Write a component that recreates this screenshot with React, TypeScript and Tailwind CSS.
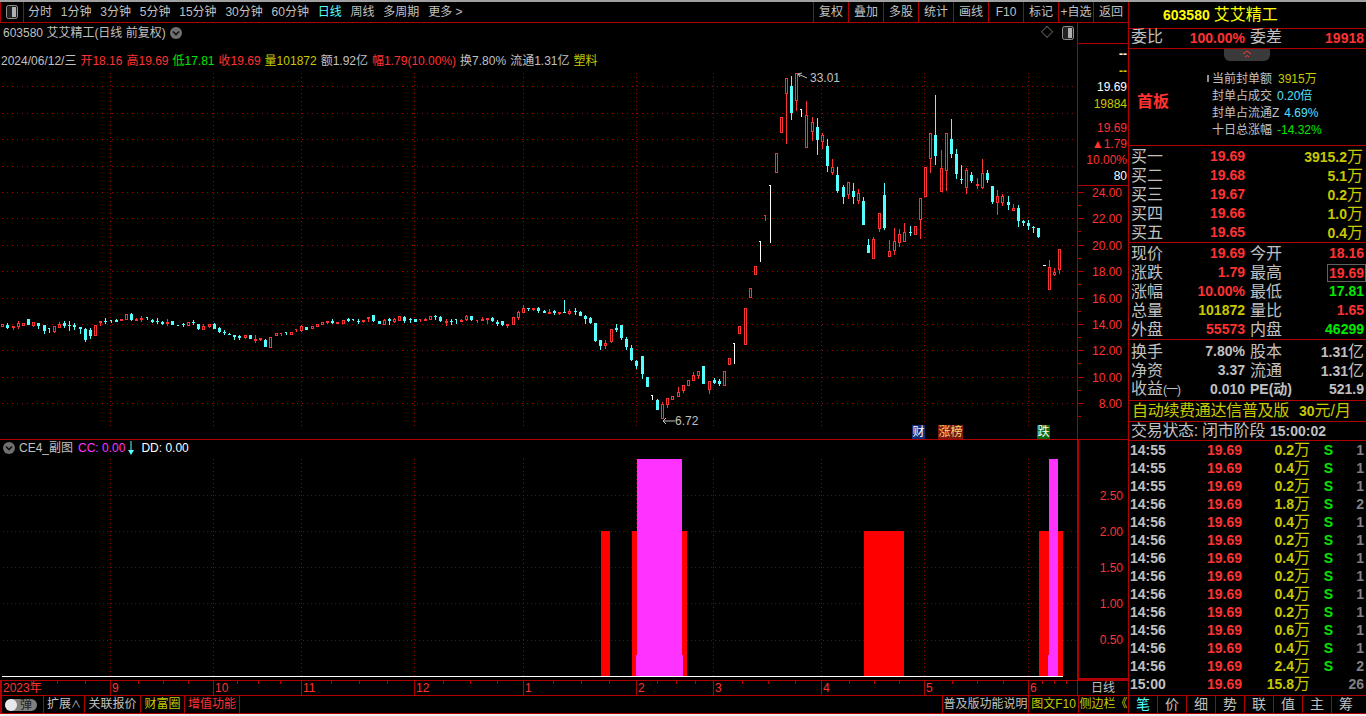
import { ReactNode } from "react";

const RED = "#ff3232";
const CYAN = "#54ffff";
const GRID = "#a00000";

// kind, body top, body bottom, wick high, wick low (pixels on the page)
type Candle = [string, number, number, number?, number?];

const candles: Candle[] = [
  ["r",324,327],["c",325,328,323,329],["r",326,328,326,330],["r",323,327,321,329],["r",323,326],
  ["c",319,325],["r",322,326,322,327],["c",323,326,323,329],["c",325,331,325,334],["q",328,333],
  ["r",326,332,326,333],["r",324,328,322,328],["c",323,326,321,328],["c",325,326,321,331],["c",325,327,323,330],
  ["c",327,329,327,334],["c",329,340,328,342],["c",330,336,328,339],["r",325,336],["r",321,323,321,326],
  ["c",321,322,318,324],["q",320,323],["c",320,322,319,322],["r",319,321],["r",314,320],
  ["c",314,320,313,321],["r",319,321,318,321],["r",318,320,316,322],["q",317,320],["c",320,322,319,323],
  ["c",321,322,318,324],["c",322,324,321,325],["r",322,324,319,326],["c",321,325],["q",325,326],
  ["c",324,325,323,327],["r",322,326],["c",322,323,320,325],["c",324,329,324,330],["r",326,330,324,330],
  ["r",324,327,324,328],["c",324,329,323,329],["c",328,332,327,333],["c",332,333,330,335],["c",334,335,333,335],
  ["c",335,337,335,340],["c",336,338,335,340],["r",335,338,335,339],["c",335,339],["r",339,341,335,343],
  ["r",338,340,338,341],["c",340,347,339,347],["r",337,348],["r",333,336],["h",333,336],
  ["q",332,335],["r",332,335],["h",329,332],["r",326,331,325,332],["c",327,330],
  ["r",326,329],["r",324,327],["r",322,325],["r",321,323,321,324],["c",321,323,319,324],
  ["r",322,324],["r",320,324],["c",319,321,318,322],["q",319,321],["c",321,322,319,324],
  ["r",320,322,320,323],["r",317,319,317,322],["c",315,321,315,322],["c",321,324],["r",320,325,319,325],
  ["c",319,321,318,325],["r",319,322,318,323],["r",316,321],["c",317,321,316,323],["c",319,320,318,323],
  ["c",319,322],["h",319,322],["r",319,321,318,321],["r",316,320],["c",316,317,315,320],
  ["c",317,321,316,322],["r",321,323,319,326],["c",321,322,319,325],["q",319,324],["r",320,322,319,322],
  ["r",316,320,315,321],["c",316,320,316,321],["h",320,323],["r",319,321,317,321],["r",318,320,318,324],
  ["c",318,321,317,322],["c",322,324,320,326],["c",321,325,321,326],["r",324,326,324,328],["r",317,325],
  ["r",312,318,311,320],["r",308,313,305,313],["c",308,309,308,311],["r",308,310,308,311],["c",308,311,307,313],
  ["c",311,313,310,313],["r",312,314,309,314],["c",311,313,310,315],["r",312,314,312,315],["c",312,313,300,313],
  ["r",311,314,309,315],["c",311,312,308,315],["c",312,316,311,316],["c",316,319,315,324],["c",318,323,317,324],
  ["c",323,341,323,342],["c",340,346,340,350],["r",343,346,340,349],["r",329,342,329,343],["c",328,330,324,332],
  ["c",325,338,325,340],["c",339,347,337,350],["c",348,360,345,361],["c",361,366,360,369],["c",356,374,356,379],
  ["c",377,387],["w",395,400],["c",400,410,399,410],["r",404,419,402,419],["r",398,405,398,408],
  ["r",396,400],["r",392,397,387,397],["r",385,391,385,393],["r",380,386],["r",375,381,372,381],
  ["r",371,376,371,379],["c",366,384],["r",381,390,381,394],["c",380,383,378,384],["c",381,384,379,386],
  ["r",371,386],["r",358,365],["w",343,364],["r",326,334],["r",308,345],
  ["r",288,298],["r",266,275],["w",241,262],["h",215,221],["w",185,243],
  ["r",153,173],["r",117,133],["r",78,94,78,144],["c",86,113,76,120],["r",73,101,73,111],
  ["w",109,117],["r",115,148,101,148],["r",122,132,117,141],["c",127,140,118,155],["r",135,142,133,149],
  ["c",146,166,139,172],["r",167,173,159,175],["c",175,191,167,193],["c",187,197,185,204],["r",182,195,182,199],
  ["c",191,197,183,204],["r",193,201,189,204],["c",201,225,197,225],["c",245,253,239,253],["r",239,259,237,259],
  ["r",213,229,213,232],["c",195,228,183,230],["r",251,257,240,257],["r",241,251,228,255],["r",234,243,229,247],
  ["r",232,242,223,242],["c",232,233,226,236],["r",226,235],["r",198,220,198,239],["r",167,197],
  ["r",133,159,133,173],["c",135,156,95,165],["r",168,192,150,192],["r",133,171,133,191],["c",139,154,119,158],
  ["c",154,174,149,179],["c",179,180,165,184],["r",170,188,168,194],["c",175,181,172,183],["r",184,186,178,189],
  ["r",173,188,159,189],["c",173,180,170,183],["c",186,202,186,204],["r",196,203,190,215],["r",196,203,194,206],
  ["c",202,205,196,210],["r",208,211,204,211],["c",208,221,205,227],["c",221,223,220,226],["c",223,226,220,230],
  ["c",227,228,226,233],["c",228,237,228,238],["d",265,266],["r",267,290,260,290],["r",272,275,268,276],
  ["r",249,270,249,274],
];

const monthLines = [110, 213, 301, 414, 523, 636, 713, 821, 924, 1028];

const candleX = (i: number) => Math.round(2.3 + 5.155 * i);

const CircleChevron = () => (
  <svg width="12" height="12" viewBox="0 0 12 12" className="shrink-0">
    <circle cx="6" cy="6" r="6" fill="#707070" />
    <path d="M3 4.5 L6 7.5 L9 4.5" fill="none" stroke="#111" strokeWidth="1.6" />
  </svg>
);

const PanelIcon = () => (
  <svg width="12" height="14" viewBox="0 0 12 14" className="shrink-0">
    <rect x="0.5" y="0.5" width="11" height="13" rx="2" fill="#222" stroke="#909090" />
    <rect x="6" y="2" width="4" height="10" fill="#b0b0b0" />
  </svg>
);

const MainChart = () => (
  <svg width="1077" height="416" viewBox="0 23 1077 416" shapeRendering="crispEdges" className="block">
    {[86, 113, 139, 166, 192, 218, 245, 271, 298, 324, 350, 377, 403].map((y) => (
      <line key={y} x1="2" x2="1076" y1={y + 0.5} y2={y + 0.5} stroke={GRID} strokeDasharray="1 4" />
    ))}
    {monthLines.map((x) => (
      <line key={x} x1={x + 0.5} x2={x + 0.5} y1="73" y2="426" stroke={GRID} strokeDasharray="1 3" />
    ))}
    {candles.map(([kind, top, bottom, high, low], i) => {
      const x = candleX(i);
      if (kind === "d") return <rect key={i} x={x - 1} y={top} width="3" height="1" fill="#fff" />;
      if (kind === "w" || kind === "h" || kind === "q") {
        const color = kind === "w" ? "#fff" : kind === "h" ? RED : CYAN;
        return (
          <g key={i} fill={color}>
            <rect x={x} y={top} width="1" height={bottom - top} />
            <rect x={x - 1} y={top} width="1" height="1" />
          </g>
        );
      }
      const color = kind === "c" ? CYAN : RED;
      return (
        <g key={i}>
          <rect x={x} y={high ?? top} width="1" height={(low ?? bottom) - (high ?? top)} fill={color} />
          {kind === "c" ? (
            <rect x={x - 1} y={top} width="3" height={Math.max(bottom - top, 1)} fill={color} />
          ) : (
            <rect x={x - 0.5} y={top + 0.5} width="2" height={Math.max(bottom - top - 1, 1)} fill="#000" stroke={color} />
          )}
        </g>
      );
    })}
    <g stroke="#c0c0c0" fill="none" shapeRendering="auto">
      <path d="M807 78 L798 74 M798 74 L802 73 M798 74 L800 77" />
      <path d="M675 421 L663 421 M663 421 L666 418 M663 421 L666 424" />
    </g>
  </svg>
);

const SubChart = () => (
  <svg width="1077" height="239" viewBox="0 440 1077 239" shapeRendering="crispEdges" className="block">
    {[495, 531, 567, 603, 640].map((y) => (
      <line key={y} x1="3" x2="1076" y1={y + 0.5} y2={y + 0.5} stroke="#800000" strokeDasharray="1 3" />
    ))}
    {monthLines.map((x) => (
      <line key={x} x1={x + 0.5} x2={x + 0.5} y1="459" y2="676" stroke={GRID} strokeDasharray="1 3" />
    ))}
    <g fill="#ff0000">
      <rect x="601" y="531" width="9" height="145" />
      <rect x="632" y="531" width="55" height="145" />
      <rect x="864" y="531" width="40" height="145" />
      <rect x="1039" y="531" width="24" height="145" />
    </g>
    <g fill="#ff33ff">
      <rect x="637" y="459" width="45" height="217" />
      <rect x="636" y="655" width="47" height="21" />
      <rect x="1049" y="459" width="9" height="217" />
      <rect x="1048" y="655" width="10" height="21" />
    </g>
    <rect x="2" y="676" width="1061" height="1" fill="#fff" />
  </svg>
);

const ToolTab = ({ children }: { children: ReactNode }) => (
  <div className="w-[35px] h-full border-l border-[#b00000] flex items-center justify-center">{children}</div>
);

const Toolbar = () => (
  <div className="h-[21px] border-b border-[#b00000] flex items-stretch text-[12px] leading-[20px] text-[#c0c0c0]">
    <div className="w-[24px] border-x border-[#b00000] flex items-center justify-center">
      <PanelIcon />
    </div>
    <div className="flex gap-[8.8px] pl-[4px]">
      <span>分时</span>
      <span>1分钟</span>
      <span>3分钟</span>
      <span>5分钟</span>
      <span>15分钟</span>
      <span>30分钟</span>
      <span>60分钟</span>
      <span className="text-[#54ffff]">日线</span>
      <span>周线</span>
      <span>多周期</span>
      <span>更多 &gt;</span>
    </div>
    <div className="ml-auto flex items-center">
      {["复权", "叠加", "多股", "统计", "画线", "F10", "标记", "+自选", "返回"].map((t) => (
        <ToolTab key={t}>{t}</ToolTab>
      ))}
    </div>
  </div>
);

const InfoItem = ({ label, value, labelColor, valueColor }: { label: string; value: string; labelColor: string; valueColor: string }) => (
  <span>
    <span style={{ color: labelColor }}>{label}</span>
    <span style={{ color: valueColor }}>{value}</span>
  </span>
);

const MainPanel = () => (
  <div className="h-[417px] border-b border-[#b00000] flex">
    <div className="relative w-[1077px]">
      <MainChart />
      <div className="absolute left-[3px] top-[1px] h-[18px] flex items-center gap-[4px] text-[12px] text-[#c0c0c0]">
        <span>603580 艾艾精工(日线 前复权)</span>
        <CircleChevron />
      </div>
      <div className="absolute right-[3px] top-[2px] flex items-center gap-[9px]">
        <span className="text-[12px] leading-[16px] text-[#a0a0a0]">◇</span>
        <PanelIcon />
      </div>
      <div className="absolute left-[1px] top-[30px] h-[16px] flex items-center gap-[4px] text-[12px] whitespace-nowrap text-[#c0c0c0]">
        <span>2024/06/12/三</span>
        <InfoItem label="开" value="18.16" labelColor={RED} valueColor={RED} />
        <InfoItem label="高" value="19.69" labelColor={RED} valueColor={RED} />
        <InfoItem label="低" value="17.81" labelColor="#00e800" valueColor="#00e800" />
        <InfoItem label="收" value="19.69" labelColor={RED} valueColor={RED} />
        <InfoItem label="量" value="101872" labelColor="#c8c800" valueColor="#c8c800" />
        <InfoItem label="额" value="1.92亿" labelColor="#c0c0c0" valueColor="#c0c0c0" />
        <InfoItem label="幅" value="1.79(10.00%)" labelColor={RED} valueColor={RED} />
        <InfoItem label="换" value="7.80%" labelColor="#c0c0c0" valueColor="#c0c0c0" />
        <InfoItem label="流通" value="1.31亿" labelColor="#c0c0c0" valueColor="#c0c0c0" />
        <span className="text-[#c8c800]">塑料</span>
      </div>
      <span className="absolute left-[810px] top-[48px] text-[12px] leading-[14px] text-[#c0c0c0]">33.01</span>
      <span className="absolute left-[675px] top-[391px] text-[12px] leading-[14px] text-[#c0c0c0]">6.72</span>
      <span className="absolute left-[912px] top-[402px] w-[13px] h-[14px] bg-[#12307a] text-white text-[12px] leading-[14px] text-center">财</span>
      <span className="absolute left-[938px] top-[402px] w-[25px] h-[14px] bg-[#7a1a10] text-[#ffd070] text-[12px] leading-[14px] text-center">涨榜</span>
      <span className="absolute left-[1037px] top-[402px] w-[13px] h-[14px] bg-[#0a6a10] text-white text-[12px] leading-[14px] text-center">跌</span>
    </div>
    <MainAxis />
  </div>
);

const AXIS_VALUES = ["24.00", "22.00", "20.00", "18.00", "16.00", "14.00", "12.00", "10.00", "8.00"];

const MainAxis = () => (
  <div className="w-[51px] border-l border-[#b00000] flex flex-col text-[12px] text-right">
    <div className="h-[21px] border-b border-[#b00000]" />
    <div className="h-[142px] border-b border-[#b00000] pt-[2px] pr-[1px] whitespace-nowrap">
      <div className="h-[16.5px] leading-[16.5px] font-bold text-white">--</div>
      <div className="h-[16.5px] leading-[16.5px] font-bold text-[#c8c800]">--</div>
      <div className="h-[16.5px] leading-[16.5px] text-white">19.69</div>
      <div className="h-[16.5px] leading-[16.5px] text-[#c8c800]">19884</div>
      <div className="h-[16px] leading-[16px] mt-[8px] text-[#ff3232]">19.69</div>
      <div className="h-[16px] leading-[16px] text-[#ff3232]">▲1.79</div>
      <div className="h-[16px] leading-[16px] text-[#ff3232]">10.00%</div>
      <div className="h-[16px] leading-[16px] text-white">80</div>
    </div>
    <div className="relative flex-1 pr-[6px] text-[#ff3232]">
      {AXIS_VALUES.map((v) => (
        <div key={v} className="h-[26.4px] leading-[14px]">{v}</div>
      ))}
      <svg width="10" height="253" className="absolute left-0 top-0" shapeRendering="crispEdges">
        {AXIS_VALUES.map((v, i) => (
          <g key={v} fill="#b00000">
            <rect x="0" y={Math.round(6 + 26.4 * i)} width="6" height="1" />
            <rect x="0" y={Math.round(19 + 26.4 * i)} width="3" height="1" />
          </g>
        ))}
      </svg>
    </div>
  </div>
);

const SUB_VALUES = ["2.50", "2.00", "1.50", "1.00", "0.50"];

const SubPanel = () => (
  <div className="h-[240px] flex">
    <div className="relative w-[1077px] h-[240px]">
      <SubChart />
      <div className="absolute left-[3px] top-0 h-[16px] flex items-center text-[12px] whitespace-nowrap">
        <CircleChevron />
        <span className="ml-[4px] text-[#c0c0c0]">CE4_副图</span>
        <span className="ml-[5px] text-[#ff33ff]">CC: 0.00</span>
        <svg width="8" height="14" viewBox="0 0 8 14" className="ml-[2px]">
          <path d="M4 0 V12" stroke={CYAN} strokeWidth="1" />
          <path d="M1 9 L4 14 L7 9 Z" fill={CYAN} />
        </svg>
        <span className="ml-[6px] text-white">DD: 0.00</span>
      </div>
    </div>
    <div className="w-[51px] h-[240px] border-l-2 border-b-2 border-[#b00000] flex flex-col items-end pr-[5px] pt-[49px] text-[12px] text-[#ff3232]">
      {SUB_VALUES.map((v) => (
        <div key={v} className="h-[36px] leading-[14px]">{v}</div>
      ))}
    </div>
  </div>
);

const MONTHS: [string, number][] = [
  ["2023年", 110], ["9", 103], ["10", 88], ["11", 113], ["12", 109], ["1", 113], ["2", 77], ["3", 108], ["4", 103], ["5", 104], ["6", 49],
];

const TimeAxis = () => (
  <div className="h-[16px] border-t border-b border-[#b00000] flex text-[12px] leading-[14px] text-[#ff3232]">
    <div className="w-[1077px] flex border-l-2 border-[#b00000]">
      {MONTHS.map(([label, width], i) => (
        <div key={label} style={{ width: i === 0 ? width - 2 : width }} className={i === 0 ? "relative pl-[1px]" : "relative pl-[1px] border-l border-[#b00000]"}>
          {label}
          <svg width={width} height="4" className="absolute left-0 top-0" shapeRendering="crispEdges">
            {[0.26, 0.5, 0.75].map((f) => (
              <rect key={f} x={Math.round(width * f)} y="0" width="1" height="3" fill="#b00000" />
            ))}
          </svg>
        </div>
      ))}
    </div>
    <div className="flex-1 border-l border-[#b00000] text-center text-[#c0c0c0]">日线</div>
  </div>
);

const BottomBar = () => (
  <div className="h-[18px] border-b border-[#b00000] flex text-[12px] leading-[17px] text-[#c0c0c0] whitespace-nowrap">
    <div className="w-[43px] border-l-2 border-[#b00000] flex items-center pl-[3px]">
      <div className="w-[32px] h-[12px] rounded-full bg-[#808080] flex items-center">
        <div className="w-[12px] h-[12px] rounded-full bg-[#e8e8e8]" />
        <span className="ml-[3px] text-[12px] leading-[12px] text-[#222]">弹</span>
      </div>
    </div>
    <div className="w-[41px] border-l border-[#b00000] text-center">
      扩展<span className="text-[10px]">∧</span>
    </div>
    <div className="w-[56px] border-l border-[#b00000] text-center">关联报价</div>
    <div className="w-[44px] border-l border-[#b00000] text-center text-[#c8c800]">财富圈</div>
    <div className="w-[56px] border-l border-[#b00000] border-r text-center text-[#ff3232]">增值功能</div>
    <div className="ml-auto w-[86px] border-l border-[#b00000] text-center">普及版功能说明</div>
    <div className="w-[50px] border-l border-[#b00000] text-center text-[#c8c800]">图文F10</div>
    <div className="w-[50px] border-l border-[#b00000] text-center text-[#c8c800]">侧边栏《</div>
  </div>
);

const QuoteRow = ({ h, a, av, ac, b, bv, bc, boxed }: { h: string; a: string; av: string; ac: string; b: string; bv: string; bc: string; boxed?: boolean }) => (
  <div className={`${h} flex items-center`}>
    <div className="w-[117px] flex justify-between pl-[2px] pr-[1px] items-center">
      <span className="text-[16px] leading-[18px] text-[#c0c0c0] font-normal">{a}</span>
      <span style={{ color: ac }}>{av}</span>
    </div>
    <div className="flex-1 flex justify-between items-center pl-[4px] pr-[2px]">
      <span className="text-[16px] leading-[18px] text-[#c0c0c0] font-normal">{b}</span>
      {boxed ? (
        <span style={{ color: bc }} className="-my-[1px] -mr-[2px] h-[18px] leading-[16px] border border-[#606060] px-[1px]">{bv}</span>
      ) : (
        <span style={{ color: bc }}>{bv}</span>
      )}
    </div>
  </div>
);

const Wan = () => <span className="text-[16px] font-normal">万</span>;
const Yi = () => <span className="text-[16px] font-normal">亿</span>;

const BuyRow = ({ label, price, volume }: { label: string; price: string; volume: string }) => (
  <div className="h-[19px] flex items-center">
    <div className="w-[117px] flex justify-between pl-[2px] pr-[1px] items-center">
      <span className="text-[16px] leading-[18px] text-[#c0c0c0] font-normal">{label}</span>
      <span className="text-[#ff3232]">{price}</span>
    </div>
    <div className="flex-1 text-right pr-[3px] text-[#c8c800] leading-[18px]">
      {volume}
      <Wan />
    </div>
  </div>
);

const TICKS: [string, string, string, string][] = [
  ["14:55", "0.2", "S", "1"], ["14:55", "0.4", "S", "1"], ["14:55", "0.2", "S", "1"], ["14:56", "1.8", "S", "2"],
  ["14:56", "0.4", "S", "1"], ["14:56", "0.2", "S", "1"], ["14:56", "0.4", "S", "1"], ["14:56", "0.2", "S", "1"],
  ["14:56", "0.4", "S", "1"], ["14:56", "0.2", "S", "1"], ["14:56", "0.6", "S", "1"], ["14:56", "0.4", "S", "1"],
  ["14:56", "2.4", "S", "2"], ["15:00", "15.8", "", "26"],
];

const SidePanel = () => (
  <div className="w-[238px] border-l border-[#b00000] flex flex-col text-[14px] font-bold whitespace-nowrap">
    <div className="h-[27px] border-b border-[#b00000] flex items-center pl-[34px] text-[#ffff00]">
      603580
      <span className="ml-[4px] text-[16px] font-normal">艾艾精工</span>
    </div>
    <div className="h-[20px] border-b border-[#b00000] flex items-center">
      <div className="w-[117px] flex justify-between pl-[2px] pr-[1px]">
        <span className="text-[16px] leading-[18px] text-[#c0c0c0] font-normal">委比</span>
        <span className="text-[#ff3232]">100.00%</span>
      </div>
      <div className="flex-1 flex justify-between pl-[4px] pr-[2px]">
        <span className="text-[16px] leading-[18px] text-[#c0c0c0] font-normal">委差</span>
        <span className="text-[#ff3232]">19918</span>
      </div>
    </div>
    <div className="relative h-[97px] border-b border-[#b00000] flex items-center">
      <div className="absolute left-[95px] top-0 w-[46px] h-[12px] rounded-b-[6px] bg-[#3a3a3a] flex justify-center">
        <svg width="10" height="10" viewBox="0 0 10 10">
          <path d="M1 5 L5 2 L9 5 M3 8 L5 6.5 L7 8" fill="none" stroke="#ff3232" />
        </svg>
      </div>
      <span className="ml-[8px] mt-[10px] w-[75px] text-[16px] text-[#ff3232]">首板</span>
      <div className="pt-[15px] text-[12px] font-normal text-[#c0c0c0]">
        <div className="h-[17px] leading-[17px] relative">
          <span className="absolute -left-[5px] top-[4px] w-[2px] h-[7px] bg-[#909090]" />
          当前封单额<span className="ml-[6px] text-[#c8c800]">3915万</span>
        </div>
        <div className="h-[17px] leading-[17px]">封单占成交<span className="ml-[5px] text-[#54e0ff]">0.20倍</span></div>
        <div className="h-[17px] leading-[17px]">封单占流通Z<span className="ml-[5px] text-[#54e0ff]">4.69%</span></div>
        <div className="h-[17px] leading-[17px]">十日总涨幅<span className="ml-[5px] text-[#00e800]">-14.32%</span></div>
      </div>
    </div>
    <div className="h-[97px] border-b border-[#b00000] pt-[1px]">
      <BuyRow label="买一" price="19.69" volume="3915.2" />
      <BuyRow label="买二" price="19.68" volume="5.1" />
      <BuyRow label="买三" price="19.67" volume="0.2" />
      <BuyRow label="买四" price="19.66" volume="1.0" />
      <BuyRow label="买五" price="19.65" volume="0.4" />
    </div>
    <div className="h-[97px] border-b border-[#b00000] pt-[1px]">
      <QuoteRow h="h-[19px]" a="现价" av="19.69" ac={RED} b="今开" bv="18.16" bc={RED} />
      <QuoteRow h="h-[19px]" a="涨跌" av="1.79" ac={RED} b="最高" bv="19.69" bc={RED} boxed />
      <QuoteRow h="h-[19px]" a="涨幅" av="10.00%" ac={RED} b="最低" bv="17.81" bc="#00e800" />
      <QuoteRow h="h-[19px]" a="总量" av="101872" ac="#c8c800" b="量比" bv="1.65" bc={RED} />
      <QuoteRow h="h-[19px]" a="外盘" av="55573" ac={RED} b="内盘" bv="46299" bc="#00e800" />
    </div>
    <div className="h-[61px] border-b border-[#b00000] pt-[2px] text-[#c0c0c0]">
      <div className="h-[19px] flex items-center">
        <div className="w-[117px] flex justify-between pl-[2px] pr-[1px] items-center">
          <span className="text-[16px] leading-[18px] font-normal">换手</span>
          <span>7.80%</span>
        </div>
        <div className="flex-1 flex justify-between items-center pl-[4px] pr-[2px]">
          <span className="text-[16px] leading-[18px] font-normal">股本</span>
          <span>1.31<Yi /></span>
        </div>
      </div>
      <div className="h-[19px] flex items-center">
        <div className="w-[117px] flex justify-between pl-[2px] pr-[1px] items-center">
          <span className="text-[16px] leading-[18px] font-normal">净资</span>
          <span>3.37</span>
        </div>
        <div className="flex-1 flex justify-between items-center pl-[4px] pr-[2px]">
          <span className="text-[16px] leading-[18px] font-normal">流通</span>
          <span>1.31<Yi /></span>
        </div>
      </div>
      <div className="h-[19px] flex items-center">
        <div className="w-[117px] flex justify-between pl-[2px] pr-[1px] items-center">
          <span className="text-[16px] leading-[18px] font-normal">
            收益<span className="text-[12px] tracking-[-1px]">(一)</span>
          </span>
          <span>0.010</span>
        </div>
        <div className="flex-1 flex justify-between items-center pl-[4px] pr-[2px]">
          <span className="text-[14px]">PE(动)</span>
          <span>521.9</span>
        </div>
      </div>
    </div>
    <div className="h-[21px] border-b border-[#b00000] flex items-center pl-[3px] text-[#c8c800]">
      <span className="text-[16px] font-normal tracking-[-0.3px]">自动续费通达信普及版</span>
      <span className="ml-[10px]">30<span className="font-normal text-[16px]">元/月</span></span>
    </div>
    <div className="h-[19px] border-b border-[#b00000] flex items-center pl-[2px] text-[#c0c0c0]">
      <span className="text-[16px] font-normal leading-[18px] tracking-[-0.3px]">交易状态: 闭市阶段</span>
      <span className="ml-[5px]">15:00:02</span>
    </div>
    <div className="h-[255px] border-b border-[#b00000]">
      {TICKS.map(([time, volume, side, count], i) => (
        <div key={i} className="h-[18px] flex items-center">
          <span className="w-[44px] pl-[1px] text-[#c0c0c0]">{time}</span>
          <span className="w-[69px] text-right text-[#ff3232]">19.69</span>
          <span className="w-[68px] text-right text-[#c8c800]">{volume}<Wan /></span>
          <span className="w-[23px] text-right text-[#00e800]">{side}</span>
          <span className="flex-1 pr-[2px] text-right text-[#808080]">{count}</span>
        </div>
      ))}
    </div>
    <div className="h-[18px] border-b border-[#b00000] flex text-[14px] font-normal leading-[17px] text-[#c0c0c0]">
      {["笔", "价", "细", "势", "联", "值", "主", "筹"].map((t, i) => (
        <div key={t} className={i === 0 ? "w-[28px] text-center text-[#54ffff]" : "w-[29px] border-l border-[#b00000] text-center"}>
          {t}
        </div>
      ))}
    </div>
  </div>
);

export default function App() {
  return (
    <div className="w-[1366px] h-[716px] overflow-hidden bg-black flex flex-col font-['Liberation_Sans','Noto_Sans_CJK_SC',sans-serif]">
      <div className="h-[2px] bg-[#a0a0a0]" />
      <div className="h-[712px] flex">
        <div className="w-[1128px] flex flex-col">
          <Toolbar />
          <MainPanel />
          <SubPanel />
          <TimeAxis />
          <BottomBar />
        </div>
        <SidePanel />
      </div>
      <div className="h-[2px] bg-[#f0f0f0]" />
    </div>
  );
}
